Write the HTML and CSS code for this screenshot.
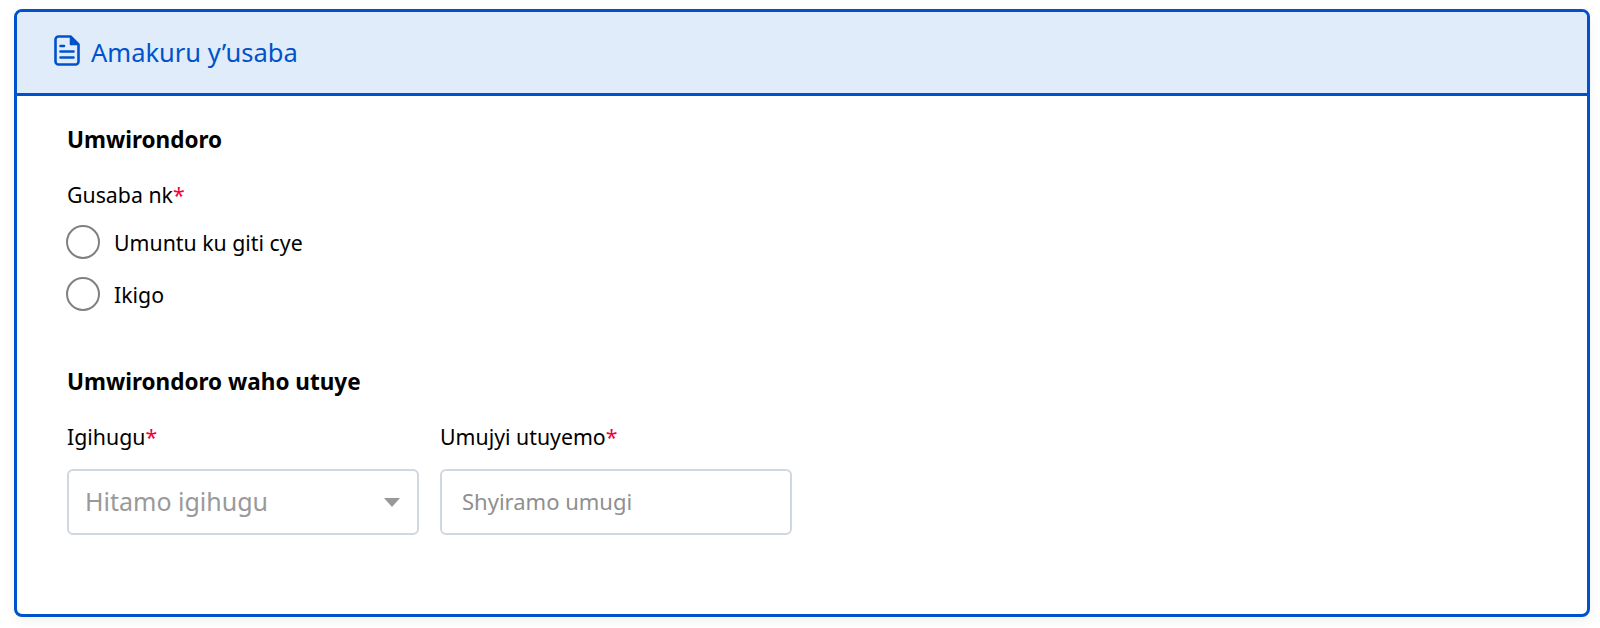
FILE: index.html
```html
<!DOCTYPE html>
<html>
<head>
	<title>Amakuru y'usaba</title>
	<link rel="stylesheet" href="styles.css">
</head>
<body>
	<div class="card">
		<div class="card-head">
			<svg class="doc-icon" width="26" height="31" viewBox="0 0 26 31" fill="none" stroke="#0052cc" stroke-width="2.6" stroke-linejoin="round" stroke-linecap="round">
				<path d="M16.500 1.500H4.500A3 3 0 0 0 1.500 4.500v22a3 3 0 0 0 3 3h17a3 3 0 0 0 3-3V9.500z"/>
				<path d="M16.500 2.500v7h7" fill="#0052cc" stroke-width="1.500"/>
				<path d="M6.500 11h3.500M6.500 16.500h13M6.500 22.500h13"/>
			</svg>
			<span class="card-title">Amakuru y’usaba</span>
		</div>
		<div class="card-body">
			<h3 class="section-title">Umwirondoro</h3>
			<div class="field-label">Gusaba nk<span class="req">*</span></div>
			<label class="radio-row"><span class="radio"></span>Umuntu ku giti cye</label>
			<label class="radio-row"><span class="radio"></span>Ikigo</label>

			<h3 class="section-title second">Umwirondoro waho utuye</h3>
			<div class="field-row">
				<div class="field">
					<div class="field-label">Igihugu<span class="req">*</span></div>
					<div class="select-box">
						<span>Hitamo igihugu</span>
						<span class="caret"></span>
					</div>
				</div>
				<div class="field">
					<div class="field-label">Umujyi utuyemo<span class="req">*</span></div>
					<input class="text-input" type="text" placeholder="Shyiramo umugi">
				</div>
			</div>
		</div>
	</div>
</body>
</html>
```

FILE: styles.css
```css
body {
	margin: 0;
	height: 628px;
	overflow: hidden;
	background-color: white;
	font-family: "Noto Sans", "Open Sans", sans-serif;
	color: #000;
}

.card {
	box-sizing: border-box;
	margin: 9px 10px 0 14px;
	height: 608px;
	border: 3px solid #0052cc;
	border-radius: 8px;
	background-color: white;
	box-shadow: 0 4px 12px rgba(0, 0, 0, 0.06);
	overflow: hidden;
}

.card-head {
	display: flex;
	align-items: center;
	gap: 11px;
	box-sizing: border-box;
	height: 84px;
	padding: 0 0 0 37px;
	background-color: #e0ecf9;
	border-bottom: 3px solid #0052cc;
}

.doc-icon {
	margin-top: -4px;
}

.card-title {
	font-size: 25.500px;
	margin-top: -2px;
	color: #0052cc;
}

.card-body {
	padding: 29px 0 0 50px;
}

.section-title {
	margin: 0;
	font-size: 22.500px;
	line-height: 30px;
	font-weight: 700;
}

.section-title.second {
	margin-top: 56px;
}

.field-label {
	font-size: 21.300px;
	line-height: 26px;
	margin-top: 27px;
}

.req {
	color: #f5003d;
}

.radio-row {
	display: flex;
	align-items: center;
	gap: 14px;
	height: 34px;
	margin-top: 18px;
	font-size: 21.300px;
}

.radio-row:first-of-type {
	margin-top: 17px;
}

.radio {
	box-sizing: border-box;
	width: 34px;
	height: 34px;
	margin-left: -1px;
	border: 2px solid #808080;
	border-radius: 50%;
}

.field-row {
	display: flex;
	gap: 21px;
}

.field {
	width: 352px;
}

.select-box, .text-input {
	box-sizing: border-box;
	width: 352px;
	height: 66px;
	margin-top: 19px;
	background-color: white;
	border: 2px solid #d0d7e0;
	border-radius: 6px;
}

.select-box {
	display: flex;
	align-items: center;
	justify-content: space-between;
	padding: 0 17px 3px 16px;
	font-size: 25px;
	color: #999;
}

.caret {
	width: 0;
	height: 0;
	margin-top: 3px;
	border-left: 8px solid transparent;
	border-right: 8px solid transparent;
	border-top: 9px solid #999;
}

.text-input {
	display: block;
	padding: 0 20px 3px;
	font-family: inherit;
	font-size: 22px;
	outline: none;
}

.text-input::placeholder {
	color: #8f8f8f;
	opacity: 1;
}
```
